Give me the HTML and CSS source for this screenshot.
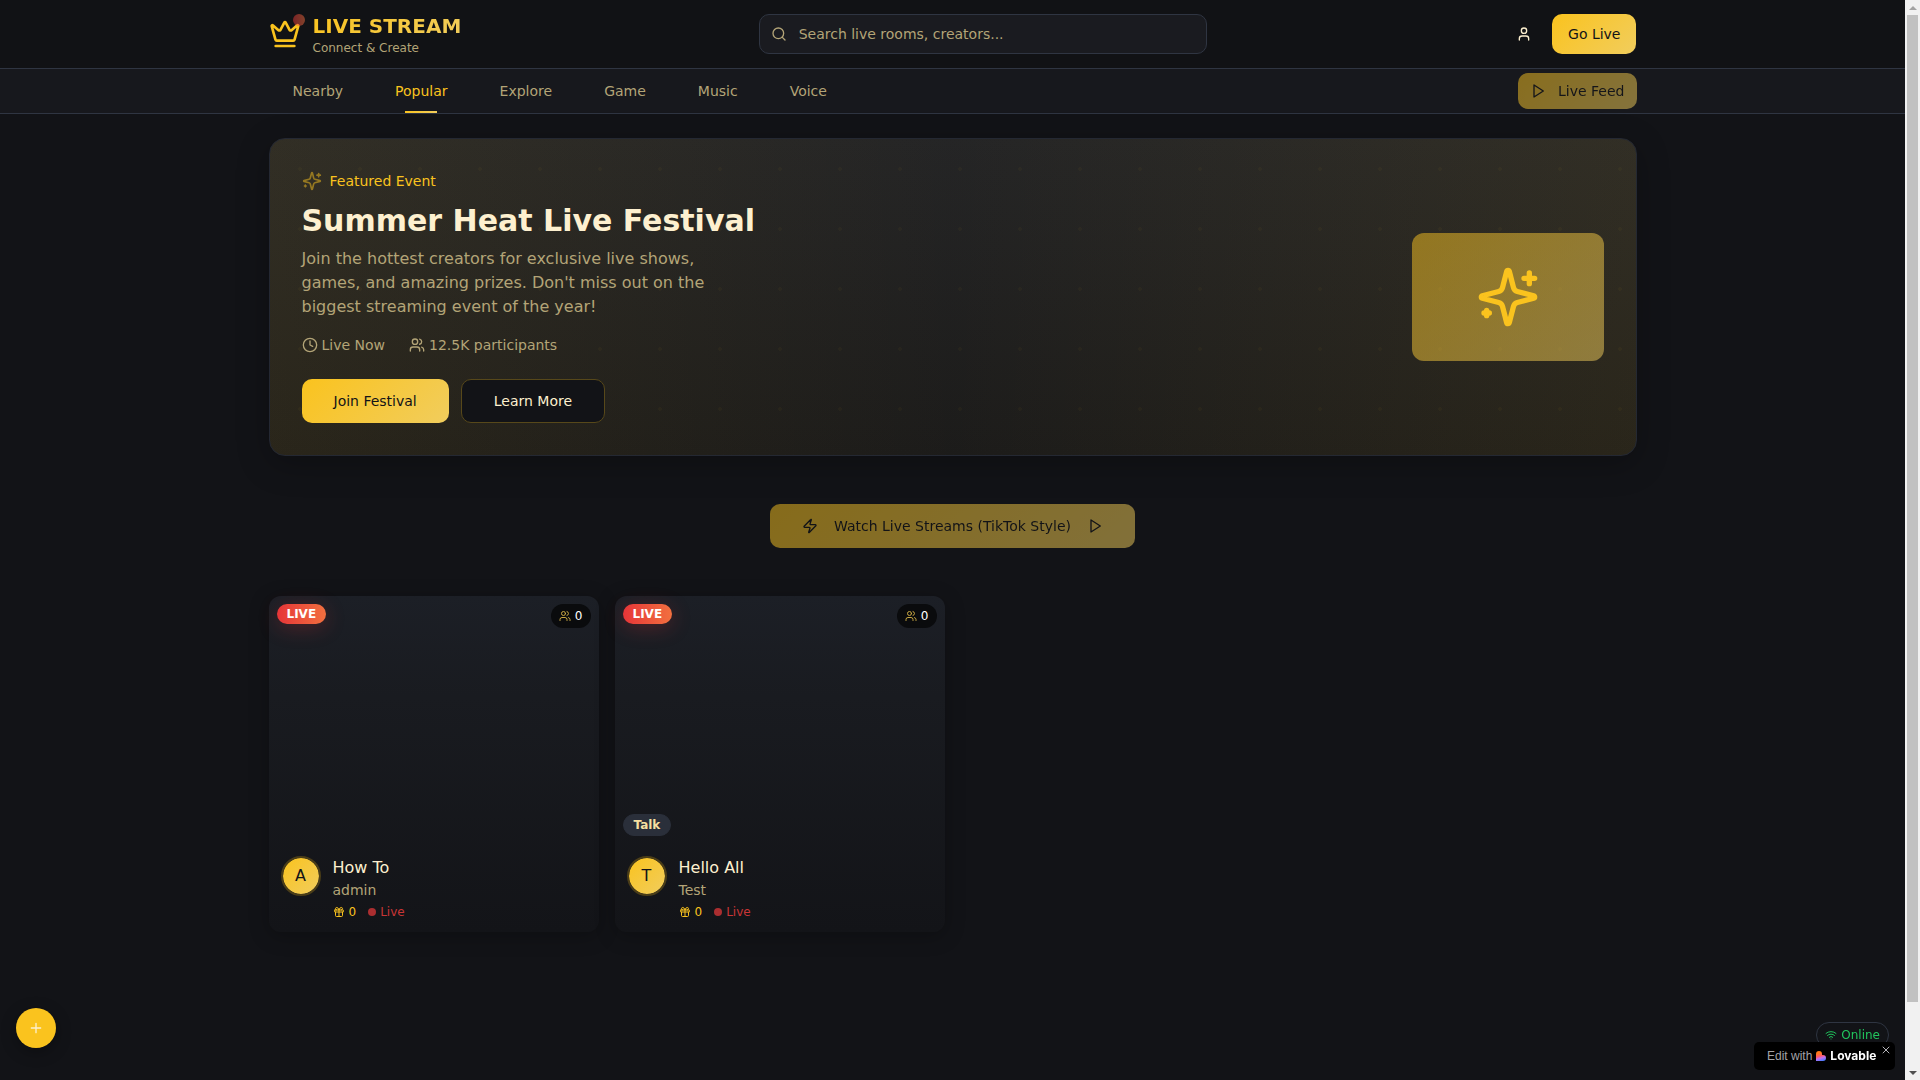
FILE: index.html
```html
<!DOCTYPE html>
<html lang="en">
<head>
<meta charset="utf-8">
<meta name="viewport" content="width=device-width, initial-scale=1">
<title>Live Stream - Connect &amp; Create</title>
<link rel="stylesheet" href="styles.css">
</head>
<body>
<svg class="defs" aria-hidden="true">
  <defs>
    <symbol id="crown" viewBox="0 0 24 24"><path d="M11.562 3.266a.5.5 0 0 1 .876 0L15.39 8.87a1 1 0 0 0 1.516.294L21.183 5.5a.5.5 0 0 1 .798.519l-2.834 10.246a1 1 0 0 1-.956.734H5.81a1 1 0 0 1-.957-.734L2.02 6.02a.5.5 0 0 1 .798-.519l4.276 3.664a1 1 0 0 0 1.516-.294z"/><path d="M5 21h14"/></symbol>
    <symbol id="search" viewBox="0 0 24 24"><circle cx="11" cy="11" r="8"/><path d="m21 21-4.300-4.300"/></symbol>
    <symbol id="user" viewBox="0 0 24 24"><path d="M19 21v-2a4 4 0 0 0-4-4H9a4 4 0 0 0-4 4v2"/><circle cx="12" cy="7" r="4"/></symbol>
    <symbol id="play" viewBox="0 0 24 24"><path d="M6 3 20 12 6 21z"/></symbol>
    <symbol id="sparkles" viewBox="0 0 24 24"><path d="M9.937 15.5A2 2 0 0 0 8.5 14.063l-6.135-1.582a.5.5 0 0 1 0-.962L8.5 9.936A2 2 0 0 0 9.937 8.5l1.582-6.135a.5.5 0 0 1 .963 0L14.063 8.5A2 2 0 0 0 15.5 9.937l6.135 1.581a.5.5 0 0 1 0 .964L15.5 14.063a2 2 0 0 0-1.437 1.437l-1.582 6.135a.5.5 0 0 1-.963 0z"/><path d="M20 3v4M22 5h-4M4 17v2M5 18H3"/></symbol>
    <symbol id="clock" viewBox="0 0 24 24"><circle cx="12" cy="12" r="10"/><path d="M12 6v6l4 2"/></symbol>
    <symbol id="people" viewBox="0 0 24 24"><path d="M16 21v-2a4 4 0 0 0-4-4H6a4 4 0 0 0-4 4v2"/><circle cx="9" cy="7" r="4"/><path d="M22 21v-2a4 4 0 0 0-3-3.870M16 3.130a4 4 0 0 1 0 7.750"/></symbol>
    <symbol id="zap" viewBox="0 0 24 24"><path d="M4 14a1 1 0 0 1-.780-1.630l9.900-10.200a.5.5 0 0 1 .860.460l-1.920 6.020A1 1 0 0 0 13 10h7a1 1 0 0 1 .780 1.630l-9.900 10.200a.5.5 0 0 1-.860-.460l1.920-6.020A1 1 0 0 0 11 14z"/></symbol>
    <symbol id="gift" viewBox="0 0 24 24"><rect x="3" y="8" width="18" height="4" rx="1"/><path d="M12 8v13M19 12v7a2 2 0 0 1-2 2H7a2 2 0 0 1-2-2v-7M7.500 8a2.500 2.500 0 0 1 0-5A4.800 8 0 0 1 12 8a4.800 8 0 0 1 4.500-5 2.500 2.500 0 0 1 0 5"/></symbol>
    <symbol id="plus" viewBox="0 0 24 24"><path d="M5 12h14M12 5v14"/></symbol>
    <symbol id="wifi" viewBox="0 0 24 24"><path d="M12 20h.01M2 8.820a15 15 0 0 1 20 0M5 12.859a10 10 0 0 1 14 0M8.500 16.429a5 5 0 0 1 7 0"/></symbol>
    <symbol id="close" viewBox="0 0 24 24"><path d="M18 6 6 18M6 6l12 12"/></symbol>
  </defs>
</svg>

<div class="page">
  <header class="header">
    <div class="container header-row">
      <a class="brand" href="#">
        <span class="brand-mark">
          <svg class="icon icon-32"><use href="#crown"/></svg>
          <span class="brand-dot"></span>
        </span>
        <span class="brand-text">
          <span class="brand-name">LIVE STREAM</span>
          <span class="brand-tag">Connect &amp; Create</span>
        </span>
      </a>
      <label class="search">
        <svg class="icon icon-16" aria-hidden="true"><use href="#search"/></svg>
        <input class="search-input" type="text" aria-label="Search" placeholder="Search live rooms, creators...">
      </label>
      <div class="header-actions">
        <button class="btn-ghost" type="button" aria-label="Profile"><svg class="icon icon-16"><use href="#user"/></svg></button>
        <button class="btn btn-gold btn-md" type="button">Go Live</button>
      </div>
    </div>
  </header>

  <nav class="nav">
    <div class="container nav-row">
      <div class="tabs">
        <button class="tab" type="button">Nearby</button>
        <button class="tab tab-active" type="button">Popular</button>
        <button class="tab" type="button">Explore</button>
        <button class="tab" type="button">Game</button>
        <button class="tab" type="button">Music</button>
        <button class="tab" type="button">Voice</button>
      </div>
      <button class="btn btn-gold btn-sm pulse" type="button"><svg class="icon icon-16"><use href="#play"/></svg>Live Feed</button>
    </div>
  </nav>

  <main class="container main">
    <section class="hero">
      <div class="hero-copy">
        <p class="hero-label"><svg class="icon icon-20"><use href="#sparkles"/></svg>Featured Event</p>
        <h1 class="hero-title">Summer Heat Live Festival</h1>
        <p class="hero-desc">Join the hottest creators for exclusive live shows, games, and amazing prizes. Don't miss out on the biggest streaming event of the year!</p>
        <div class="hero-meta">
          <span class="meta"><svg class="icon icon-16"><use href="#clock"/></svg>Live Now</span>
          <span class="meta"><svg class="icon icon-16"><use href="#people"/></svg>12.5K participants</span>
        </div>
        <div class="hero-actions">
          <button class="btn btn-gold btn-lg" type="button">Join Festival</button>
          <button class="btn btn-outline btn-lg" type="button">Learn More</button>
        </div>
      </div>
      <div class="hero-art"><svg class="icon icon-64"><use href="#sparkles"/></svg></div>
    </section>

    <button class="btn btn-gold btn-lg btn-watch pulse" type="button"><svg class="icon icon-16"><use href="#zap"/></svg>Watch Live Streams (TikTok Style)<svg class="icon icon-16"><use href="#play"/></svg></button>

    <section class="rooms">
      <article class="room">
        <div class="room-cover">
          <span class="badge badge-live">LIVE</span>
          <span class="viewers"><svg class="icon icon-12"><use href="#people"/></svg>0</span>
        </div>
        <div class="room-body">
          <span class="avatar">A</span>
          <div class="room-info">
            <h2 class="room-title">How To</h2>
            <p class="room-host">admin</p>
            <div class="room-stats">
              <span class="stat stat-gift"><svg class="icon icon-12"><use href="#gift"/></svg>0</span>
              <span class="stat stat-live"><span class="dot"></span>Live</span>
            </div>
          </div>
        </div>
      </article>
      <article class="room">
        <div class="room-cover">
          <span class="badge badge-live">LIVE</span>
          <span class="viewers"><svg class="icon icon-12"><use href="#people"/></svg>0</span>
          <span class="badge badge-topic">Talk</span>
        </div>
        <div class="room-body">
          <span class="avatar">T</span>
          <div class="room-info">
            <h2 class="room-title">Hello All</h2>
            <p class="room-host">Test</p>
            <div class="room-stats">
              <span class="stat stat-gift"><svg class="icon icon-12"><use href="#gift"/></svg>0</span>
              <span class="stat stat-live"><span class="dot"></span>Live</span>
            </div>
          </div>
        </div>
      </article>
    </section>
  </main>
</div>

<button class="fab" type="button" aria-label="Create"><svg class="icon icon-16"><use href="#plus"/></svg></button>
<div class="status"><svg class="icon icon-12"><use href="#wifi"/></svg>Online</div>
<aside class="made-with">
  <a class="made-link" href="#">Edit with
    <svg class="made-logo" viewBox="0 0 20 20" aria-hidden="true">
      <defs>
        <linearGradient id="heart" x1="0.300" y1="0" x2="0.600" y2="1">
          <stop offset="0.200" stop-color="#ff7a1a"/><stop offset="0.500" stop-color="#ff5a6a"/><stop offset="0.700" stop-color="#c070f0"/><stop offset="1" stop-color="#4b7bff"/>
        </linearGradient>
      </defs>
      <path fill="url(#heart)" d="M6 0a6 6 0 0 1 6 6v2h2a6 6 0 0 1 0 12H0V6a6 6 0 0 1 6-6z"/>
    </svg>
    <strong class="made-name">Lovable</strong>
  </a>
  <button class="made-close" type="button" aria-label="Close"><svg class="icon icon-12"><use href="#close"/></svg></button>
</aside>
<div class="scrollbar" aria-hidden="true">
  <span class="arrow arrow-up"></span>
  <span class="track"><span class="thumb"></span></span>
  <span class="arrow arrow-down"></span>
</div>
</body>
</html>
```
FILE: styles.css
```css
:root {
  --bg: #121317;
  --panel: #17181d;
  --line: #2f3542;
  --text: #fdf0cf;
  --muted: #b3a477;
  --gold: #fac31e;
  --ink: #121317;
  --gold-gradient: linear-gradient(135deg, #fac31e, #f1cd5d);
  --scrollbar: 15px;
}

* { box-sizing: border-box; margin: 0; }

body {
  min-height: 100vh;
  padding-right: var(--scrollbar);
  background: var(--bg);
  color: var(--text);
  font: 14px/20px "DejaVu Sans", sans-serif;
}

button, input { font: inherit; color: inherit; border: 0; background: none; padding: 0; }
button { cursor: pointer; }
a { color: inherit; text-decoration: none; }

.defs { position: absolute; width: 0; height: 0; }
.icon { flex: none; fill: none; stroke: currentColor; stroke-width: 2; stroke-linecap: round; stroke-linejoin: round; }
.icon-12 { width: 12px; height: 12px; }
.icon-16 { width: 16px; height: 16px; }
.icon-20 { width: 20px; height: 20px; }
.icon-32 { width: 32px; height: 32px; }
.icon-64 { width: 64px; height: 64px; }

.container { max-width: 1400px; margin: 0 auto; padding: 0 16px; }

/* Header */
.header { background: #111215; border-bottom: 1px solid var(--line); }
.header-row { display: flex; align-items: center; justify-content: space-between; padding-top: 12px; padding-bottom: 12px; }
.brand { display: flex; align-items: center; gap: 12px; }
.brand-mark { position: relative; display: flex; color: var(--gold); }
.brand-dot { position: absolute; top: -4px; right: -4px; width: 12px; height: 12px; border-radius: 50%; background: linear-gradient(90deg, #e63538, #f2703f); opacity: .5; }
.brand-text { display: flex; flex-direction: column; }
.brand-name { font-size: 20px; line-height: 28px; font-weight: 700; background: var(--gold-gradient); background-clip: text; -webkit-background-clip: text; color: transparent; }
.brand-tag { font-size: 12px; line-height: 16px; color: var(--muted); }
.search { display: flex; align-items: center; gap: 12px; flex: 0 1 448px; height: 40px; padding: 0 11px; border: 1px solid var(--line); border-radius: 10px; background: #1a1b20; color: var(--muted); }
.search-input { flex: 1; min-width: 0; outline: 0; }
.search-input::placeholder { color: var(--muted); opacity: 1; }
.header-actions { display: flex; align-items: center; gap: 8px; }
.btn-ghost { display: flex; align-items: center; justify-content: center; width: 40px; height: 40px; }

.btn { display: inline-flex; align-items: center; justify-content: center; border-radius: 10px; white-space: nowrap; }
.btn-gold { background: var(--gold-gradient); color: var(--ink); }
.btn-outline { background: var(--bg); border: 1px solid #57481a; }
.btn-sm { height: 36px; padding: 0 12px; gap: 12px; }
.btn-md { height: 40px; padding: 0 16px; }
.btn-lg { height: 44px; padding: 0 32px; }
.pulse { opacity: .5; }

/* Category tabs */
.nav { background: var(--panel); border-bottom: 1px solid var(--line); }
.nav-row { display: flex; align-items: center; justify-content: space-between; }
.tabs { display: flex; gap: 4px; }
.tab { position: relative; height: 44px; padding: 0 24px; color: var(--muted); }
.tab-active { color: var(--gold); }
.tab-active::after { content: ""; position: absolute; left: 50%; bottom: 0; width: 32px; height: 2px; margin-left: -16px; background: var(--gold-gradient); }

/* Featured event */
.main { padding-top: 24px; padding-bottom: 32px; display: flex; flex-direction: column; gap: 48px; }
.hero {
  display: flex; align-items: center; justify-content: space-between;
  padding: 32px; border: 1px solid #242832; border-radius: 16px;
  background:
    radial-gradient(circle at 30px 30px, rgba(250, 195, 30, .03) 2px, transparent 2px) 0 0 / 60px 60px,
    linear-gradient(90deg, rgba(250, 195, 30, .09), rgba(250, 195, 30, .03) 50%, rgba(250, 195, 30, .09)),
    linear-gradient(180deg, #1e2026, #15161a);
  box-shadow: 0 8px 32px rgba(0, 0, 0, .25);
}
.hero-copy { max-width: 460px; }
.hero-label { display: flex; align-items: center; gap: 8px; margin-bottom: 12px; color: var(--gold); }
.hero-label .icon { opacity: .5; }
.hero-title { margin-bottom: 8px; font-size: 30px; line-height: 36px; font-weight: 700; white-space: nowrap; }
.hero-desc { max-width: 448px; margin-bottom: 16px; font-size: 16px; line-height: 24px; color: var(--muted); }
.hero-meta { display: flex; gap: 24px; margin-bottom: 24px; color: var(--muted); }
.meta { display: flex; align-items: center; gap: 4px; }
.hero-actions { display: flex; gap: 12px; }
.hero-art { display: flex; align-items: center; justify-content: center; width: 192px; height: 128px; border-radius: 12px; background: linear-gradient(135deg, rgba(250, 195, 30, .5), rgba(242, 206, 94, .5)); color: var(--gold); }
.btn-watch { align-self: center; gap: 16px; }

/* Room cards */
.rooms { display: grid; grid-template-columns: repeat(4, 1fr); gap: 16px; }
.room { border-radius: 12px; background: linear-gradient(180deg, #1c1f26, #191b20 30%, #131418); box-shadow: 0 4px 20px rgba(0, 0, 0, .25); }
.room-cover { position: relative; aspect-ratio: 4 / 3; }
.badge { position: absolute; left: 8px; padding: 2px 10px; border-radius: 20px; font-size: 12px; line-height: 16px; font-weight: 700; }
.badge-live { top: 8px; color: #fff; background: linear-gradient(90deg, #e63538, #f2703f); box-shadow: 0 4px 20px rgba(230, 53, 56, .25); }
.badge-topic { bottom: 8px; border: 1px solid #2a2f3a; background: #2a2f3a; color: #f5dfa0; }
.viewers { position: absolute; top: 8px; right: 8px; display: flex; align-items: center; gap: 4px; padding: 4px 8px; border-radius: 12px; background: #0a0b0d; color: #fff; font-size: 12px; line-height: 16px; }
.viewers .icon { color: #c9a843; }
.room-body { display: flex; align-items: flex-start; gap: 12px; padding: 12px; }
.avatar { display: flex; align-items: center; justify-content: center; width: 40px; height: 40px; border: 2px solid #4a3d18; border-radius: 50%; background: var(--gold-gradient) padding-box; color: var(--ink); font-size: 16px; }
.room-title { font-size: 16px; line-height: 24px; font-weight: 400; }
.room-host { color: var(--muted); }
.room-stats { display: flex; gap: 12px; margin-top: 4px; font-size: 12px; line-height: 16px; }
.stat { display: flex; align-items: center; gap: 4px; }
.stat-gift { color: var(--gold); }
.stat-live { color: #c93536; }
.dot { width: 8px; height: 8px; border-radius: 50%; background: #ab2e30; }

/* Floating controls */
.fab { position: fixed; left: 16px; bottom: 32px; display: flex; align-items: center; justify-content: center; width: 40px; height: 40px; border-radius: 50%; background: var(--gold); box-shadow: 0 4px 16px rgba(0, 0, 0, .3); }
.status { position: fixed; right: 31px; bottom: 32px; display: flex; align-items: center; gap: 4px; padding: 4px 8px; border: 1px solid var(--line); border-radius: 13px; color: #21c45d; font-size: 12px; line-height: 16px; }
.made-with { position: fixed; right: 25px; bottom: 10px; display: flex; width: 141px; height: 28px; padding-left: 13px; border-radius: 5px; background: #000; font: 12px/28px "Liberation Sans", sans-serif; color: #a3a3a8; }
.made-link { display: flex; align-items: center; gap: 4px; white-space: nowrap; }
.made-logo { width: 10px; height: 10px; }
.made-name { color: #fff; font-family: Inter, sans-serif; }
.made-close { position: absolute; top: 2px; right: 3px; display: flex; color: #b5b5ba; }

/* Page scrollbar */
.scrollbar { position: fixed; top: 0; right: 0; bottom: 0; display: flex; flex-direction: column; width: var(--scrollbar); background: #f1f1f1; }
.arrow { display: flex; align-items: center; justify-content: center; height: 15px; }
.arrow::before { content: ""; border: 4px solid transparent; }
.arrow-up::before { border-top: 0; border-bottom-color: #a3a3a3; }
.arrow-down::before { border-bottom: 0; border-top-color: #505050; }
.track { flex: 1; padding: 0 2px; }
.thumb { display: block; height: 94%; background: #c1c1c1; }
```
